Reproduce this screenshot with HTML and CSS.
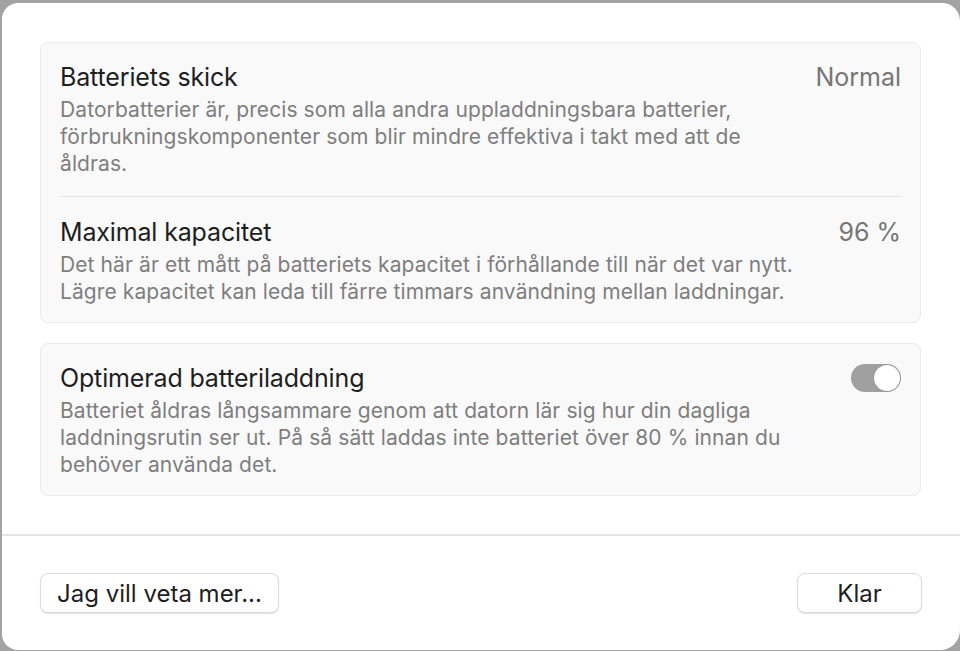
FILE: index.html
```html
<!DOCTYPE html>
<html lang="sv">
<head>
<meta charset="utf-8">
<link rel="stylesheet" href="styles.css">
</head>
<body>
<div class="dialog">
  <div class="content">
    <section class="card">
      <div class="row first">
        <div class="head"><span class="title">Batteriets skick</span><span class="value">Normal</span></div>
        <p class="desc">Datorbatterier är, precis som alla andra uppladdningsbara batterier, förbrukningskomponenter som blir mindre effektiva i takt med att de åldras.</p>
      </div>
      <div class="divider"></div>
      <div class="row after-divider">
        <div class="head"><span class="title">Maximal kapacitet</span><span class="value">96 %</span></div>
        <p class="desc wide">Det här är ett mått på batteriets kapacitet i förhållande till när det var nytt.<br>Lägre kapacitet kan leda till färre timmars användning mellan laddningar.</p>
      </div>
    </section>
    <section class="card">
      <div class="row last">
        <div class="head"><span class="title">Optimerad batteriladdning</span><span class="toggle"><span class="knob"></span></span></div>
        <p class="desc">Batteriet åldras långsammare genom att datorn lär sig hur din dagliga laddningsrutin ser ut. På så sätt laddas inte batteriet över 80 % innan du behöver använda det.</p>
      </div>
    </section>
  </div>
  <div class="footer">
    <button class="btn btn-more">Jag vill veta mer...</button>
    <button class="btn btn-done">Klar</button>
  </div>
</div>
</body>
</html>
```
FILE: styles.css
```css
html, body {
  margin: 0;
  padding: 0;
}
body {
  background: #a3a3a3;
  padding: 3px 0 1px 2px;
  font-family: Inter, "Noto Sans", sans-serif;
  height: 651px;
  box-sizing: border-box;
  overflow: hidden;
}
.dialog {
  background: #ffffff;
  border-radius: 16px 18px 20px 16px;
  height: 647px;
  box-sizing: border-box;
  display: flex;
  flex-direction: column;
}
.content {
  padding: 39px 39px 38px 38px;
  display: flex;
  flex-direction: column;
  gap: 20px;
}
.card {
  background: #f9f9f9;
  border: 1px solid #ebebeb;
  border-radius: 8px;
  padding: 0 19px;
}
.row {
  padding: 19px 0 16px;
}
.row.first {
  padding-bottom: 19px;
}
.row.after-divider {
  padding-top: 20px;
  padding-bottom: 17px;
}
.row.last {
  padding-bottom: 17px;
}
.divider {
  height: 1px;
  background: #e3e3e3;
}
.head {
  display: flex;
  justify-content: space-between;
  align-items: center;
  height: 30px;
  margin-bottom: 4px;
}
.title {
  font-size: 25px;
  color: #1e1e1e;
  letter-spacing: -0.15px;
}
.value {
  font-size: 25px;
  color: #767676;
}
.desc {
  margin: 0;
  font-size: 21px;
  line-height: 27px;
  color: #7e7e7e;
  letter-spacing: 0.1px;
  max-width: 735px;
}
.desc.wide {
  max-width: none;
}
.toggle {
  width: 50px;
  height: 28px;
  border-radius: 14px;
  background: #a0a0a0;
  box-sizing: border-box;
  display: flex;
  justify-content: flex-end;
  align-items: center;
  padding: 1px;
}
.knob {
  width: 26px;
  height: 26px;
  border-radius: 50%;
  background: #ffffff;
  box-shadow: 0 0 0 0.5px #8a8a8a;
}
.footer {
  border-top: 2px solid #e4e4e4;
  display: flex;
  justify-content: space-between;
  align-items: flex-start;
  padding: 37px 38px 0 38px;
}
.btn {
  font-family: Inter, "Noto Sans", sans-serif;
  font-size: 24px;
  color: #1e1e1e;
  background: #ffffff;
  border: 1px solid #dcdcdc;
  border-radius: 8px;
  height: 40px;
  box-shadow: 0 1px 1px rgba(0,0,0,0.12);
  padding: 0 15px;
}
.btn-more {
  width: 239px;
}
.btn-done {
  width: 125px;
}
```
